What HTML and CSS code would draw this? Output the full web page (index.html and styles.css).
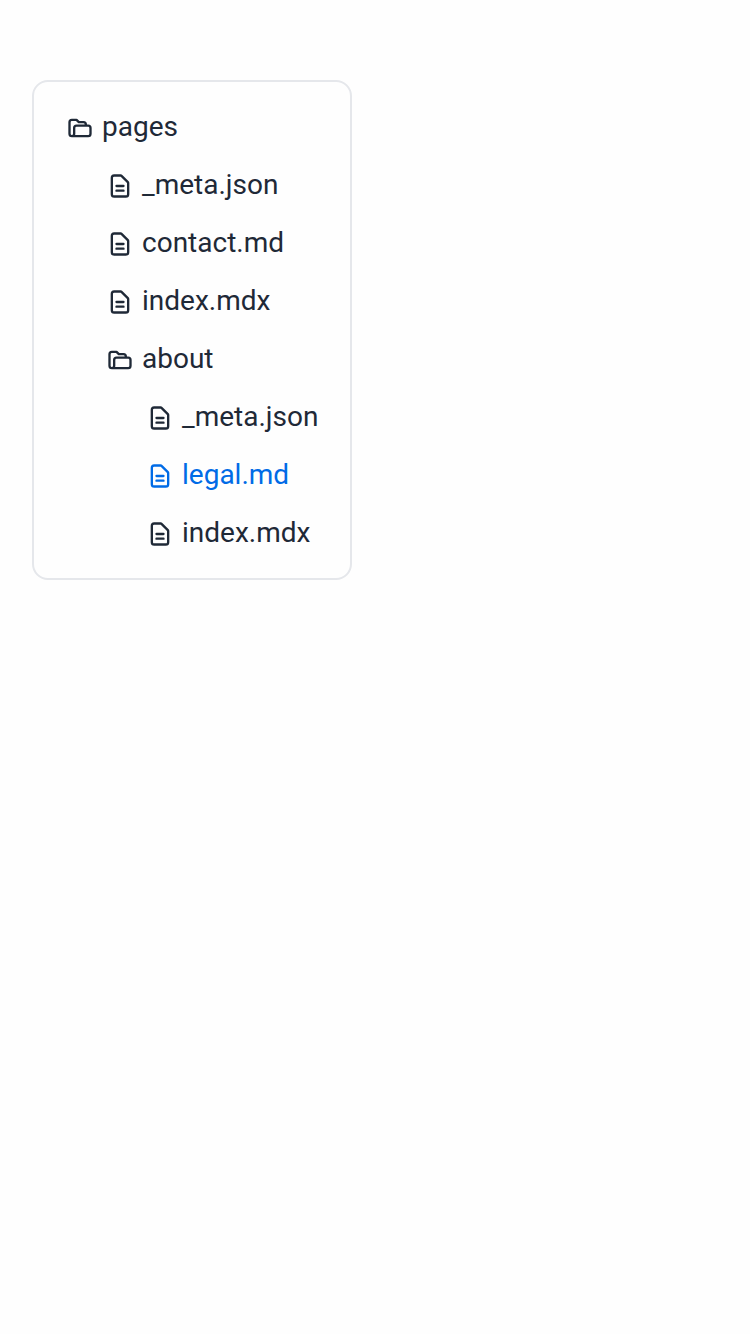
FILE: index.html
```html
<!DOCTYPE html>
<html lang="en">
<head>
<meta charset="utf-8">
<title>File tree</title>
<link rel="stylesheet" href="styles.css">
</head>
<body>
<svg class="sprite" width="0" height="0" aria-hidden="true">
  <symbol id="folder" viewBox="0 0 24 24"><path d="M5 19a2 2 0 01-2-2V7a2 2 0 012-2h4l2 2h4a2 2 0 012 2v1M5 19h14a2 2 0 002-2v-5a2 2 0 00-2-2H9a2 2 0 00-2 2v5a2 2 0 01-2 2z"/></symbol>
  <symbol id="file" viewBox="0 0 24 24"><path d="M9 12h6m-6 4h6m2 5H7a2 2 0 01-2-2V5a2 2 0 012-2h5.586a1 1 0 01.707.293l5.414 5.414a1 1 0 01.293.707V19a2 2 0 01-2 2z"/></symbol>
</svg>
<div class="tree">
  <ul class="list">
    <li><div class="item"><svg class="icon"><use href="#folder"/></svg><span>pages</span></div>
      <ul class="list nested">
        <li><div class="item"><svg class="icon"><use href="#file"/></svg><span>_meta.json</span></div></li>
        <li><div class="item"><svg class="icon"><use href="#file"/></svg><span>contact.md</span></div></li>
        <li><div class="item"><svg class="icon"><use href="#file"/></svg><span>index.mdx</span></div></li>
        <li><div class="item"><svg class="icon"><use href="#folder"/></svg><span>about</span></div>
          <ul class="list nested">
            <li><div class="item"><svg class="icon"><use href="#file"/></svg><span>_meta.json</span></div></li>
            <li><div class="item active"><svg class="icon"><use href="#file"/></svg><span>legal.md</span></div></li>
            <li><div class="item"><svg class="icon"><use href="#file"/></svg><span>index.mdx</span></div></li>
          </ul>
        </li>
      </ul>
    </li>
  </ul>
</div>
</body>
</html>
```

FILE: styles.css
```css
body { margin: 0; padding: 80px 32px; background: #fefefe; color: #1f2937; font-family: Roboto, sans-serif; font-size: 28px; }
.sprite { position: absolute; }
.tree { box-sizing: border-box; width: 320px; height: 500px; padding: 16px 32px; border: 2px solid #e5e7eb; border-radius: 16px; }
.list { margin: 0; padding: 0; list-style: none; }
.nested { padding-left: 40px; }
.item { display: flex; align-items: center; gap: 8px; height: 58px; line-height: 40px; white-space: nowrap; }
.icon { flex: none; width: 28px; height: 28px; margin-top: 2px; fill: none; stroke: currentColor; stroke-width: 2; stroke-linecap: round; stroke-linejoin: round; }
.active { color: #006be6; }
```
